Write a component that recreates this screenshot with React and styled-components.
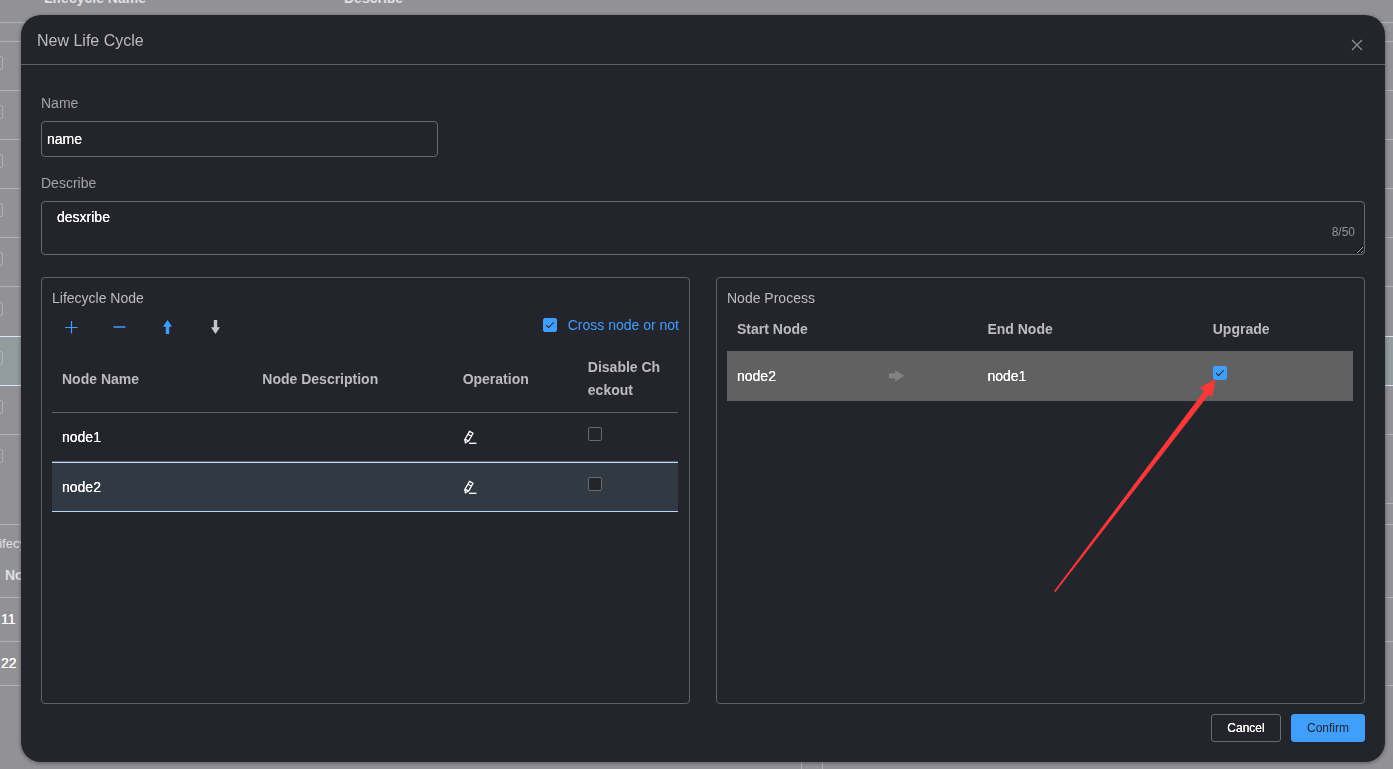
import React, { useState } from 'react';
import styled, { createGlobalStyle } from 'styled-components';

const GlobalStyle = createGlobalStyle`
  *, *::before, *::after {
    box-sizing: border-box;
  }

  body {
    margin: 0;
    min-height: 100vh;
    overflow: hidden;
    background: #929195;
    color: #bcbcc0;
    font-family: 'Liberation Sans', Arial, sans-serif;
    font-size: 14px;
    line-height: 23px;
  }

  button, input, textarea {
    font: inherit;
    color: inherit;
  }
`;

// ---------- Page behind the dialog ----------
const Page = styled.div`
  height: 100vh;
  overflow: hidden;
  color: #e0e0e2;
`;

const PageHead = styled.div`
  display: grid;
  grid-template-columns: 44px 300px 1fr;
  height: 23px;
  border-bottom: 1px solid #b3b3b3;
  font-weight: bold;
  line-height: 20px;

  span {
    margin-top: -12px;
  }
`;

const PageGap = styled.div`
  height: ${({ $size }) => $size}px;
  margin-left: ${({ $indent }) => $indent || 0}px;
  border-bottom: 1px solid #b3b3b3;
`;

const PageRow = styled.div`
  height: ${({ $height }) => $height || 49}px;
  display: flex;
  align-items: center;
  padding-bottom: 6px;
  border-bottom: 1px solid ${({ $line }) => $line || '#b3b3b3'};
  background: ${({ $selected }) => ($selected ? '#929c9f' : 'transparent')};
`;

const PageBox = styled.span`
  width: 14px;
  height: 14px;
  margin-left: -11px;
  border: 1px solid #b0b0b0;
  border-radius: 2px;
`;

const PageSection = styled.div`
  height: 73px;
  padding-top: 7px;
  border-bottom: 1px solid #b3b3b3;
`;

const PageCaption = styled.div`
  margin-left: -8px;
  font-size: 13px;
`;

const PageColumn = styled.div`
  padding: 9px 5px;
  font-weight: bold;
`;

const PageCell = styled.div`
  height: 44px;
  padding-left: 1px;
  border-bottom: 1px solid #b3b3b3;
  color: #ffffff;
  line-height: 43px;
  text-shadow: 0 0 0 #ffffff;
`;

const PageSplit = styled.div`
  display: grid;
  grid-template-columns: 802px 1fr;
  gap: 20px;
  height: 84px;

  div:first-child {
    border-right: 1px solid #b3b3b3;
  }

  div:last-child {
    border-left: 1px solid #b3b3b3;
  }
`;

// ---------- Dialog ----------
const Overlay = styled.div`
  position: fixed;
  inset: 0;
  display: flex;
  padding: 15px 8px 7px 21px;
`;

const Dialog = styled.section`
  flex: 1;
  display: flex;
  flex-direction: column;
  min-width: 0;
  background: #24242d;
  border-radius: 20px;
  box-shadow: 0 1px 4px rgba(0, 0, 0, 0.4);
`;

const DialogHeader = styled.header`
  display: flex;
  align-items: flex-end;
  justify-content: space-between;
  height: 50px;
  padding: 0 20px 11px 16px;
  border-bottom: 1px solid #626262;

  h1 {
    margin: 0;
    font-size: 16px;
    font-weight: normal;
    line-height: 24px;
  }
`;

const IconButton = styled.button`
  display: flex;
  align-items: center;
  justify-content: ${({ $align }) => $align || 'center'};
  width: 16px;
  height: 16px;
  padding: 0;
  border: 0;
  background: none;
  color: ${({ $color }) => $color || '#909399'};
  cursor: pointer;
`;

const DialogBody = styled.div`
  flex: 1;
  display: flex;
  flex-direction: column;
  padding: 24px 20px 10px;
`;

const Field = styled.div`
  display: flex;
  flex-direction: column;

  label {
    height: 32px;
    line-height: 28px;
    color: #a3a3a8;
  }
`;

const TextInput = styled.input`
  width: 30%;
  height: 36px;
  margin-bottom: 12px;
  padding: 0 5px;
  border: 1px solid #6b6b6c;
  border-radius: 4px;
  outline: none;
  background: transparent;
  color: #ffffff;
  text-shadow: 0 0 0 #ffffff;
`;

const TextAreaWrap = styled.div`
  position: relative;
  display: flex;
  margin-bottom: 22px;
`;

const TextArea = styled.textarea`
  flex: 1;
  height: 54px;
  padding: 4px 15px;
  border: 1px solid #6b6b6c;
  border-radius: 4px;
  outline: none;
  background: transparent;
  color: #ffffff;
  line-height: 22px;
  text-shadow: 0 0 0 #ffffff;
  resize: vertical;
`;

const Counter = styled.span`
  position: absolute;
  right: 10px;
  bottom: 11px;
  color: #909399;
  font-size: 12px;
`;

const Panels = styled.div`
  flex: 1;
  display: grid;
  grid-template-columns: 1fr 1fr;
  gap: 26px;
`;

const Panel = styled.section`
  min-width: 0;
  padding: 8px 11px 10px 10px;
  border: 1px solid #626262;
  border-radius: 4px;

  h2 {
    margin: 0;
    font-size: 14px;
    font-weight: normal;
    line-height: 24px;
  }
`;

const Toolbar = styled.div`
  display: flex;
  align-items: center;
  gap: 32px;
  height: 34px;
  padding-left: 11px;
`;

const CheckLabel = styled.label`
  display: flex;
  align-items: center;
  gap: 11px;
  margin: 0 -1px 4px auto;
  color: #409eff;
`;

const Table = styled.table`
  width: 100%;
  table-layout: fixed;
  border-collapse: separate;
  border-spacing: 0;

  th, td {
    padding: 0 10px;
    text-align: left;
    word-break: break-all;
  }

  th {
    font-weight: bold;
  }

  td {
    color: #ffffff;
    text-shadow: 0 0 0 #ffffff;
  }
`;

const NodeHead = styled.tr`
  height: 69px;

  th {
    padding: 2px 16px 0 10px;
    border-bottom: 1px solid #626262;
  }
`;

const NodeRow = styled.tr`
  height: ${({ $selected }) => ($selected ? 50 : 49)}px;
  background: ${({ $selected }) => ($selected ? '#313942' : 'transparent')};

  td {
    border-top: ${({ $selected }) => ($selected ? '1px solid #b3d8ff' : '0')};
    border-bottom: 1px solid ${({ $selected }) => ($selected ? '#b3d8ff' : '#626262')};
  }
`;

const ProcessHead = styled.tr`
  height: 41px;

  th {
    padding-bottom: 2px;
  }
`;

const ProcessRow = styled.tr`
  height: 50px;
  background: #616161;
`;

const CheckHolder = styled.span`
  position: relative;
  display: flex;
  padding-bottom: 6px;
`;

const Checkbox = styled.input.attrs({ type: 'checkbox' })`
  appearance: none;
  flex: none;
  width: 14px;
  height: 14px;
  margin: 0;
  border: 1px solid #6b6b6c;
  border-radius: 2px;
  background: #24242d;
  cursor: pointer;

  &:checked {
    border-color: #409eff;
    background: #409eff;
  }

  &:checked::after {
    content: '';
    display: block;
    width: 4px;
    height: 8px;
    margin: 1px 0 0 4px;
    border: solid #24242d;
    border-width: 0 1px 1px 0;
    transform: rotate(45deg);
  }
`;

const Pointer = styled.svg`
  position: absolute;
  top: 13px;
  right: calc(100% - 3px);
  pointer-events: none;
`;

const DialogFooter = styled.footer`
  display: flex;
  justify-content: flex-end;
  gap: 10px;
  padding: 0 20px 20px;
`;

const Button = styled.button`
  min-width: 70px;
  height: 28px;
  padding: 0 15px;
  border: 1px solid ${({ $primary }) => ($primary ? '#409eff' : '#6b6b6c')};
  border-radius: 3px;
  background: ${({ $primary }) => ($primary ? '#409eff' : 'transparent')};
  color: ${({ $primary }) => ($primary ? '#24242d' : '#ffffff')};
  font-size: 12px;
  line-height: 14px;
  text-shadow: ${({ $primary }) => ($primary ? 'none' : '0 0 0 #ffffff')};
  cursor: pointer;
`;

// ---------- Icons ----------
const CloseIcon = () => (
  <svg width="12" height="12" viewBox="0 0 12 12" fill="none" stroke="currentColor" strokeWidth="1.2">
    <path d="M1 1l10 10M11 1L1 11" />
  </svg>
);

const PlusIcon = () => (
  <svg width="14" height="14" viewBox="0 0 14 14" fill="none" stroke="currentColor" strokeWidth="1.2">
    <path d="M1 7.5h12.500M7.500 1v12.500" />
  </svg>
);

const MinusIcon = () => (
  <svg width="14" height="14" viewBox="0 0 14 14" fill="none" stroke="currentColor" strokeWidth="1.5">
    <path d="M1.500 7h12" />
  </svg>
);

const ArrowIcon = ({ angle = 0 }) => (
  <svg width="14" height="14" viewBox="0 0 14 14" fill="currentColor">
    <path d="M7.500 0L12 6.800H9.200V14H5.800V6.800H3Z" transform={angle ? `rotate(${angle} 7.500 7)` : undefined} />
  </svg>
);

const RightIcon = () => (
  <svg width="18" height="12" viewBox="0 0 18 12" fill="#818181" style={{ display: 'block' }}>
    <path d="M3 3.200h5V1.200Q8 .2 9 .5l7.300 4.400q1 .9 0 1.700L9 11.200q-1 .3-1-.8V8.400H3Q2 8.400 2 7.400V4.200q0-1 1-1z" />
  </svg>
);

const EditIcon = () => (
  <svg width="14" height="14" viewBox="0 0 14 14" fill="none" stroke="currentColor" strokeWidth="1.3">
    <path d="M6.500 1.400L10 3.300 5.800 10.800 2.600 12.800 1.700 9.800ZM5 4.200l3.600 2M1.900 9.200l3.800 2M1.700 12.600l1-.2" />
    <path d="M6 13.300h7.500" />
  </svg>
);

const pageRows = [
  {},
  {},
  {},
  {},
  {},
  { line: '#d5e6f5', height: 50 },
  { line: '#d5e6f5', selected: true },
  {},
  { line: 'transparent' },
];

const nodes = [
  { name: 'node1', selected: false },
  { name: 'node2', selected: true },
];

const App = () => {
  const [name, setName] = useState('name');
  const [describe, setDescribe] = useState('desxribe');

  return (
    <>
      <GlobalStyle />

      <Page aria-hidden="true">
        <PageHead>
          <i />
          <span>Lifecycle Name</span>
          <span>Describe</span>
        </PageHead>
        <PageGap $size={19} />
        {pageRows.map((row, index) => (
          <PageRow key={index} $height={row.height} $selected={row.selected} $line={row.line}>
            <PageBox />
          </PageRow>
        ))}
        <PageGap $size={20} $indent={40} />
        <PageGap $size={21} />
        <PageSection>
          <PageCaption>Lifecycle Node</PageCaption>
          <PageColumn>Node Name</PageColumn>
        </PageSection>
        <PageCell>11</PageCell>
        <PageCell>22</PageCell>
        <PageSplit>
          <div />
          <div />
        </PageSplit>
      </Page>

      <Overlay>
        <Dialog role="dialog" aria-labelledby="dialog-title">
          <DialogHeader>
            <h1 id="dialog-title">New Life Cycle</h1>
            <IconButton aria-label="Close">
              <CloseIcon />
            </IconButton>
          </DialogHeader>

          <DialogBody>
            <Field>
              <label htmlFor="name">Name</label>
              <TextInput id="name" value={name} onChange={(e) => setName(e.target.value)} />
            </Field>
            <Field>
              <label htmlFor="describe">Describe</label>
              <TextAreaWrap>
                <TextArea
                  id="describe"
                  maxLength={50}
                  value={describe}
                  onChange={(e) => setDescribe(e.target.value)}
                />
                <Counter>{describe.length}/50</Counter>
              </TextAreaWrap>
            </Field>

            <Panels>
              {/* Nodes of the life cycle */}
              <Panel>
                <h2>Lifecycle Node</h2>
                <Toolbar>
                  <IconButton $color="#409eff" aria-label="Add node">
                    <PlusIcon />
                  </IconButton>
                  <IconButton $color="#409eff" aria-label="Remove node">
                    <MinusIcon />
                  </IconButton>
                  <IconButton $color="#409eff" aria-label="Move up">
                    <ArrowIcon />
                  </IconButton>
                  <IconButton $color="#c5c7cc" aria-label="Move down">
                    <ArrowIcon angle={180} />
                  </IconButton>
                  <CheckLabel>
                    <Checkbox defaultChecked />
                    Cross node or not
                  </CheckLabel>
                </Toolbar>
                <Table>
                  <colgroup>
                    <col width="32%" />
                    <col width="32%" />
                    <col width="20%" />
                    <col width="16%" />
                  </colgroup>
                  <thead>
                    <NodeHead>
                      <th>Node Name</th>
                      <th>Node Description</th>
                      <th>Operation</th>
                      <th>Disable Checkout</th>
                    </NodeHead>
                  </thead>
                  <tbody>
                    {nodes.map((node) => (
                      <NodeRow key={node.name} $selected={node.selected}>
                        <td>{node.name}</td>
                        <td />
                        <td>
                          <IconButton $color="#ffffff" $align="flex-start" aria-label={`Edit ${node.name}`}>
                            <EditIcon />
                          </IconButton>
                        </td>
                        <td>
                          <CheckHolder>
                            <Checkbox aria-label={`Disable checkout of ${node.name}`} />
                          </CheckHolder>
                        </td>
                      </NodeRow>
                    ))}
                  </tbody>
                </Table>
              </Panel>

              {/* Transitions between nodes */}
              <Panel>
                <h2>Node Process</h2>
                <Table>
                  <colgroup>
                    <col width="24%" />
                    <col width="16%" />
                    <col width="36%" />
                    <col width="24%" />
                  </colgroup>
                  <thead>
                    <ProcessHead>
                      <th>Start Node</th>
                      <th />
                      <th>End Node</th>
                      <th>Upgrade</th>
                    </ProcessHead>
                  </thead>
                  <tbody>
                    <ProcessRow>
                      <td>node2</td>
                      <td>
                        <RightIcon />
                      </td>
                      <td>node1</td>
                      <td>
                        <CheckHolder>
                          <Checkbox defaultChecked aria-label="Upgrade" />
                          <Pointer width="162" height="214" viewBox="0 0 162 214" fill="#fb3838">
                            <path d="M161.500 0L158.300 17.700 154.700 15.700 1.400 213 0 212.300 150 12.300 145.700 8.700Z" />
                          </Pointer>
                        </CheckHolder>
                      </td>
                    </ProcessRow>
                  </tbody>
                </Table>
              </Panel>
            </Panels>
          </DialogBody>

          <DialogFooter>
            <Button>Cancel</Button>
            <Button $primary>Confirm</Button>
          </DialogFooter>
        </Dialog>
      </Overlay>
    </>
  );
};

export default App;
